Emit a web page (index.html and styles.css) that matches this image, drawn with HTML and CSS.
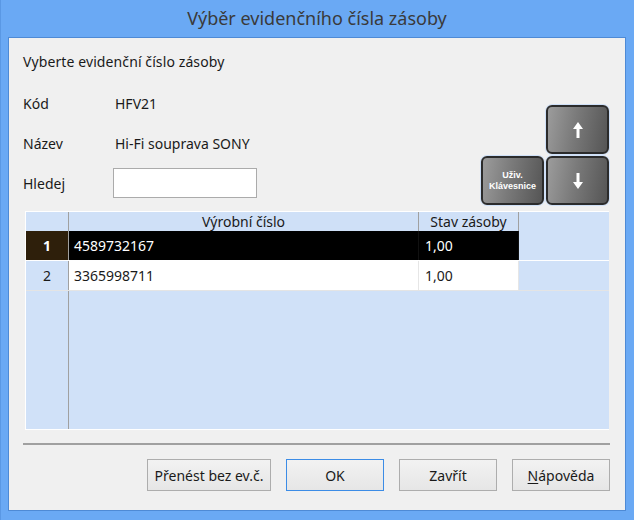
FILE: index.html
```html
<!DOCTYPE html>
<html lang="cs">
<head>
<meta charset="utf-8">
<title>Výběr evidenčního čísla zásoby</title>
<link rel="stylesheet" href="styles.css">
</head>
<body>
<div class="window">
  <div class="titlebar">Výběr evidenčního čísla zásoby</div>
  <div class="client">
    <div class="top">
      <div class="fields">
        <div class="intro">Vyberte evidenční číslo zásoby</div>
        <div class="field"><span class="label">Kód</span><span class="value">HFV21</span></div>
        <div class="field"><span class="label">Název</span><span class="value">Hi-Fi souprava SONY</span></div>
        <div class="field"><span class="label">Hledej</span><input class="search" type="text"></div>
      </div>
      <div class="keypad">
        <div class="key key-up">
          <svg width="12" height="18" viewBox="0 0 12 18"><path d="M6 1 L11 8 H7.5 V17 H4.5 V8 H1 Z" fill="#fff"/></svg>
        </div>
        <div class="key key-kbd"><span>Uživ.</span><span>Klávesnice</span></div>
        <div class="key key-down">
          <svg width="12" height="18" viewBox="0 0 12 18"><path d="M6 17 L11 10 H7.5 V1 H4.5 V10 H1 Z" fill="#fff"/></svg>
        </div>
      </div>
    </div>
    <div class="grid">
      <div class="row head">
        <div class="c rh"></div>
        <div class="c c1">Výrobní číslo</div>
        <div class="c c2">Stav zásoby</div>
      </div>
      <div class="row sel">
        <div class="c rh">1</div>
        <div class="c c1">4589732167</div>
        <div class="c c2">1,00</div>
      </div>
      <div class="row">
        <div class="c rh">2</div>
        <div class="c c1">3365998711</div>
        <div class="c c2">1,00</div>
      </div>
      <div class="rest"><div class="rest-rh"></div></div>
    </div>
    <div class="sep"></div>
    <div class="buttons">
      <button class="btn btn-wide">Přenést bez ev.č.</button>
      <button class="btn btn-default">OK</button>
      <button class="btn">Zavřít</button>
      <button class="btn"><u>N</u>ápověda</button>
    </div>
  </div>
</div>
</body>
</html>
```
FILE: styles.css
```css
* { box-sizing: border-box; }
html, body { margin: 0; padding: 0; }
body {
  width: 634px;
  height: 520px;
  overflow: hidden;
  font-family: "Noto Sans", "Open Sans", sans-serif;
  font-size: 14px;
  color: #1a1a1a;
}
.window {
  width: 634px;
  height: 520px;
  background: #6aa9f4;
  border-left: 1px solid #5a98e4;
  display: flex;
  flex-direction: column;
}
.titlebar {
  height: 37px;
  line-height: 37px;
  text-align: center;
  font-size: 18px;
  color: #3a3a3a;
  padding-right: 1px;
}
.client {
  margin-left: 7px;
  width: 618px;
  height: 474px;
  background: #f0f0f0;
  border: 1px solid #4e8ad5;
  padding: 0 15px 0 14px;
  display: flex;
  flex-direction: column;
}
.top {
  height: 173px;
  display: flex;
  justify-content: space-between;
}
.fields {
  display: flex;
  flex-direction: column;
}
.intro {
  margin-top: 14px;
  line-height: 20px;
  height: 20px;
  letter-spacing: 0.1px;
}
.field {
  height: 40px;
  display: flex;
  align-items: center;
}
.intro + .field { margin-top: 11px; }
.label {
  width: 92px;
}
.search {
  width: 144px;
  height: 30px;
  border: 1px solid #ababab;
  background: #fff;
  margin: 0 0 0 -2px;
}
.keypad {
  margin-top: 67px;
  margin-right: 1px;
  display: grid;
  grid-template-columns: 63px 63px;
  grid-template-rows: 49px 49px;
  gap: 2px;
  align-self: flex-start;
}
.key {
  border: 2px solid #2b2b2b;
  border-radius: 6px;
  background: linear-gradient(100deg, #9c9c9c 0%, #7a7a7a 45%, #555 100%);
  box-shadow: 0 0 0 1px #cfe0f7;
  display: flex;
  align-items: center;
  justify-content: center;
  color: #fff;
}
.key-up { grid-column: 2; grid-row: 1; }
.key-kbd {
  grid-column: 1; grid-row: 2;
  flex-direction: column;
  font-size: 9px;
  font-weight: bold;
  line-height: 11px;
  font-family: "Liberation Sans", sans-serif;
}
.key-down { grid-column: 2; grid-row: 2; }
.grid {
  margin-left: 2px;
  width: 584px;
  height: 219px;
  background: #d0e1f8;
  border-top: 1px solid #fff;
  border-left: 1px solid #fff;
  display: flex;
  flex-direction: column;
}
.row {
  display: flex;
  height: 30px;
  line-height: 29px;
}
.row.head {
  height: 19px;
  line-height: 19px;
  width: 583px;
}
.c {
  white-space: nowrap;
  overflow: hidden;
}
.rh {
  width: 43px;
  text-align: center;
  border-right: 1px solid #a0a0a0;
  flex: none;
}
.c1 {
  width: 350px;
  padding-left: 5px;
  border-right: 1px solid #e6e6e6;
  background: #fff;
  flex: none;
}
.c2 {
  width: 100px;
  padding-left: 6px;
  background: #fff;
  border-right: 1px solid #e6e6e6;
  flex: none;
}
.row.data { }
.row { border-bottom: 1px solid #e4e4e4; }
.row.head { border-bottom: 0; }
.row .rh { background: #d0e1f8; }
.head .c1, .head .c2 {
  background: #cfe0f7;
  text-align: center;
  padding-left: 0;
  border-right-color: #a0a0a0;
}
.row.sel .rh {
  background: #2e1f0b;
  color: #fff;
  font-weight: bold;
}
.row.sel .c1, .row.sel .c2 {
  background: #000;
  color: #fff;
  border-right-color: #111;
}
.row.sel { border-bottom: 1px solid #fff; }
.rest {
  flex: 1;
  display: flex;
  border-bottom: 1px solid #fff;
}
.rest-rh {
  width: 43px;
  border-right: 1px solid #a0a0a0;
}
.sep {
  margin-top: 13px;
  height: 2px;
  background: #a0a0a0;
  width: 587px;
}
.buttons {
  margin-top: 14px;
  display: flex;
  justify-content: flex-end;
  gap: 15px;
  padding-right: 0;
}
.btn {
  width: 98px;
  height: 32px;
  border: 1px solid #adadad;
  background: linear-gradient(#f2f2f2, #e6e6e6);
  font-family: "Noto Sans", "Open Sans", sans-serif;
  font-size: 14px;
  color: #1a1a1a;
  padding: 0;
  margin: 0;
}
.btn-wide { width: 124px; }
.btn-default { border-color: #3c8ce6; }
.btn u { text-decoration: underline; text-underline-offset: 2px; }
```
